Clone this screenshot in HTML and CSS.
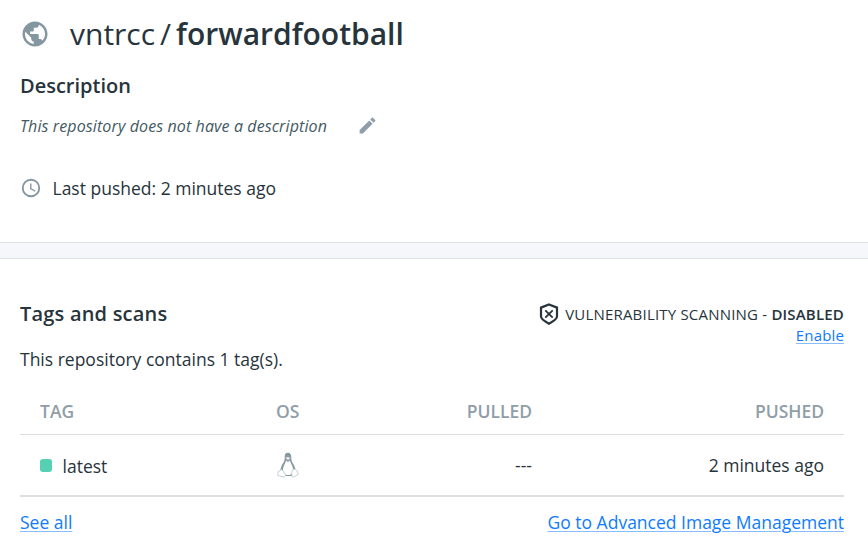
FILE: index.html
```html
<!DOCTYPE html>
<html lang="en">
<head>
<meta charset="utf-8">
<title>vntrcc/forwardfootball</title>
<link rel="stylesheet" href="styles.css">
</head>
<body>
<section class="overview">
  <h1 class="title">
    <svg class="globe" viewBox="0 0 24 24"><path d="M12 2C6.48 2 2 6.48 2 12s4.480 10 10 10 10-4.480 10-10S17.520 2 12 2zm-1 17.930c-3.950-.49-7-3.850-7-7.930 0-.62.080-1.210.21-1.790L9 15v1c0 1.100.9 2 2 2v1.930zm6.900-2.540c-.26-.81-1-1.390-1.900-1.390h-1v-3c0-.55-.45-1-1-1H8v-2h2c.55 0 1-.45 1-1V7h2c1.100 0 2-.9 2-2v-.41c2.930 1.190 5 4.060 5 7.410 0 2.080-.8 3.970-2.100 5.390z"/></svg>
    <span class="owner">vntrcc</span><span class="slash">/</span><span class="repo">forwardfootball</span>
  </h1>
  <h2 class="heading description-heading">Description</h2>
  <div class="description">
    <span class="description-text">This repository does not have a description</span>
    <svg class="pencil" viewBox="0 0 24 24"><path d="M3 17.250V21h3.750L17.810 9.940l-3.750-3.750L3 17.250zM20.710 7.040c.39-.39.39-1.020 0-1.410l-2.340-2.340c-.39-.39-1.020-.39-1.410 0l-1.830 1.830 3.750 3.750 1.830-1.830z"/></svg>
  </div>
  <div class="pushed">
    <svg class="clock" viewBox="0 0 24 24"><path d="M12 2a10 10 0 1 0 0 20 10 10 0 0 0 0-20zm0 18a8 8 0 1 1 0-16 8 8 0 0 1 0 16zm.5-13H11v6l5.250 3.150.75-1.230-4.500-2.670z"/></svg>
    <span class="pushed-text">Last pushed: 2 minutes ago</span>
  </div>
</section>
<section class="tags">
  <div class="tags-top">
    <h2 class="heading tags-heading">Tags and scans</h2>
    <div class="scanning">
      <div class="status">
        <svg class="shield" viewBox="0 0 20 24"><path d="M10 2.500 18 5.600v8.800c0 2.600-3.800 4.900-8 7.300-4.200-2.400-8-4.700-8-7.300V5.600z"/><path class="cross" d="m6.300 8.300 7.400 7.400m0-7.400-7.400 7.400"/></svg>
        <span class="status-text">VULNERABILITY SCANNING - <b>DISABLED</b></span>
      </div>
      <a class="link enable" href="#">Enable</a>
    </div>
  </div>
  <p class="count"><span>This repository contains 1 tag(s).</span></p>
  <table class="table">
    <thead><tr><th class="c-tag">TAG</th><th class="c-os">OS</th><th class="c-pulled">PULLED</th><th class="c-pushed">PUSHED</th></tr></thead>
    <tbody><tr>
      <td><div class="tag"><i class="dot"></i><span>latest</span></div></td>
      <td class="os-cell"><svg class="tux" viewBox="0 0 22 26">
        <path class="tux-body" d="M11 .8C8.700.8 7.600 2.400 7.700 4.800c.1 3.200-.3 4.300-1.700 6.500-1.500 2.400-2.600 5-2.700 8.200L6 24h10l2.700-4.500c-.1-3.600-1.500-6.100-3-8.500-1.200-2-1.400-3.300-1.400-6C14.300 2.400 13.300.8 11 .8z"/>
        <path class="tux-belly" d="M9 8.500c-.4 2.600-3.200 6-3.200 9.900 0 1.800 1.800 4.700 5.200 4.700s5.200-2.300 5.200-4.700c0-4-2.600-6.900-3.300-9.900L11 10z"/>
        <path class="tux-beak" d="m8.500 6.100 2.400-1.200 2.500 1.200-2.400 2z"/>
        <path class="tux-foot" d="M4.300 17.200c1.200.4 2.600 3.200 4 5.400.7 1.200-.3 2.700-2 2.400L.9 23.500c-.7-.4.200-1.700 0-3.300-.1-1.200 1.900-.5 2.300-1.600z"/>
        <path class="tux-foot" d="M17.700 17.200c-1.800-.3-2.800 1-2.800 3.400 0 2.500-.6 4.300 1.200 4.500 1.600.2 2.700-1.800 5.100-2.700.8-.4-.8-1.300-1-2.800-.2-1.300-1.100-2.200-2.500-2.400z"/>
      </svg></td>
      <td class="c-pulled">---</td>
      <td class="c-pushed">2 minutes ago</td>
    </tr></tbody>
  </table>
  <div class="links"><a class="link" href="#">See all</a><a class="link" href="#">Go to Advanced Image Management</a></div>
</section>
</body>
</html>
```
FILE: styles.css
```css
* { box-sizing: border-box; }
html { background: #fff; }
body { margin: 0; background: #fff; color: #27343b; font: 400 17.5px/24px "Open Sans", sans-serif; }
h1, h2, p { margin: 0; }
svg { display: block; flex: none; }
.overview { height: 243px; padding: 14px 20px 0; border-bottom: 1px solid #dfe1e5; box-shadow: 0 15px 0 #f6f7fa; }
.title { display: flex; align-items: center; height: 40px; font-size: 30px; line-height: 40px; font-weight: 400; }
.globe { width: 30px; height: 30px; margin-right: 20px; fill: #8496a0; }
.slash { margin: 0 5px; }
.repo { font-weight: 600; }
.heading { font-size: 20px; line-height: 28px; font-weight: 600; }
.description-heading { margin-top: 18px; }
.tags-heading { letter-spacing: .2px; }
.description { display: flex; align-items: center; height: 24px; margin-top: 14px; font-size: 16px; font-style: italic; color: #445962; }
.description-text { width: 307px; white-space: nowrap; letter-spacing: .11px; }
.pencil { width: 21px; height: 21px; margin-left: 30px; margin-top: -2px; fill: #8f9eaa; }
.pushed { display: flex; align-items: center; height: 24px; margin-top: 38px; }
.clock { width: 22px; height: 22px; margin-right: 10.5px; fill: #8496a0; }
.tags { margin-top: 15px; border-top: 1px solid #dfe1e5; padding: 41px 24px 0 20px; background: #fff; }
.tags-top { display: flex; justify-content: space-between; height: 47px; }
.scanning { display: flex; flex-direction: column; align-items: flex-end; font-size: 15px; }
.status { display: flex; align-items: center; height: 28px; letter-spacing: .2px; }
.status b { font-weight: 600; letter-spacing: .18px; }
.shield { width: 20px; height: 24px; margin-right: 6px; fill: none; stroke: #27343b; stroke-width: 2.200; }
.cross { stroke-width: 1.800; }
.enable { line-height: 20px; margin-top: -3px; letter-spacing: .15px; }
.link { color: #0f7bff; text-decoration: underline; text-decoration-color: #87bdff; text-decoration-thickness: 1px; text-underline-offset: 2px; }
.count { height: 24px; }
.table { width: 824px; margin-top: 18px; border-collapse: collapse; table-layout: fixed; }
th, td { padding: 0 20px; text-align: left; }
th { height: 45px; color: #8f9ea7; font-weight: 600; border-bottom: 1px solid #dcdede; }
td { height: 62px; border-bottom: 2px solid #dddfe0; }
.c-tag { width: 236px; }
.c-os { width: 117px; }
.c-pulled { width: 179px; text-align: right; }
.c-pushed { text-align: right; }
.tag { display: flex; align-items: center; padding-top: 2px; }
.dot { width: 12px; height: 13px; border-radius: 3px; margin-right: 10.5px; background: #56d0b2; }
.tux { width: 22px; height: 26px; margin-left: 1px; }
.tux-body { fill: #8798a1; }
.tux-belly { fill: #fff; }
.tux-beak { fill: #f1f4f5; stroke: #b4c0c6; stroke-width: .5; }
.tux-foot { fill: #fff; stroke: #b4c0c6; stroke-width: .8; }
.links { display: flex; justify-content: space-between; margin-top: 13px; }
```
